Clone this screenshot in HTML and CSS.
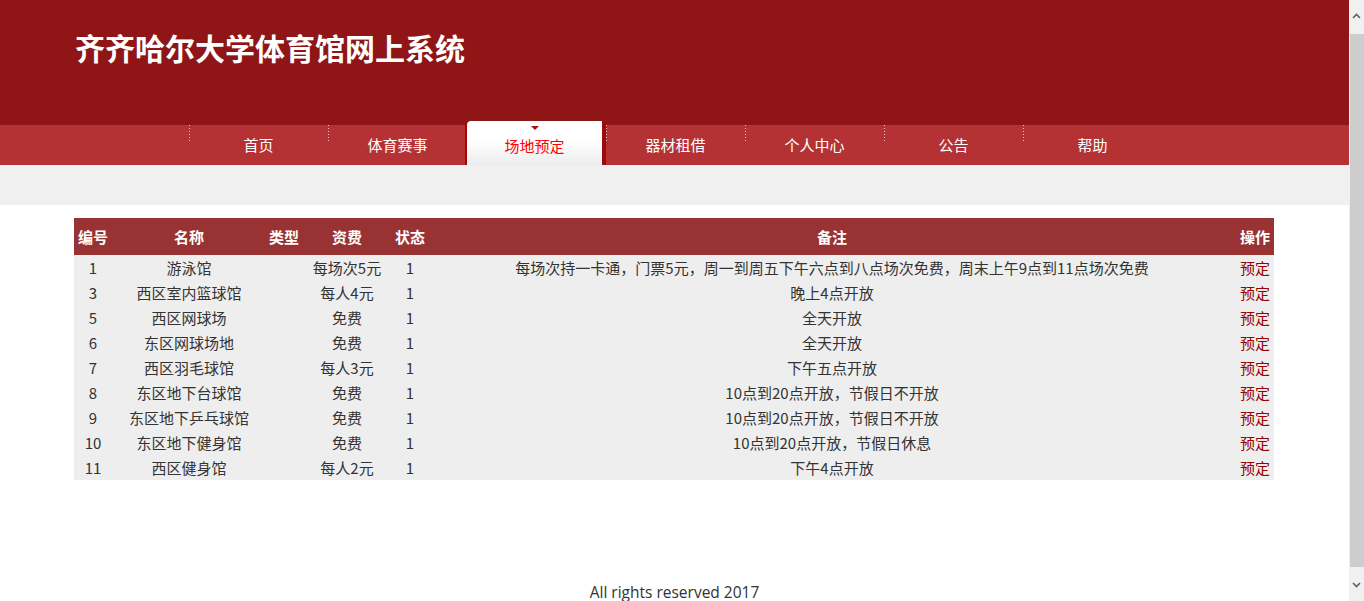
FILE: index.html
```html
<!DOCTYPE html>
<html lang="zh-CN">
<head>
<meta charset="utf-8">
<title>齐齐哈尔大学体育馆网上系统</title>
<link rel="stylesheet" href="styles.css">
</head>
<body>
<header class="top">
  <h1 class="title">齐齐哈尔大学体育馆网上系统</h1>
</header>
<nav class="nav">
  <ul class="menu">
    <li class="item"><a href="#">首页</a></li>
    <li class="item"><a href="#">体育赛事</a></li>
    <li class="item active"><span class="arrow"></span><a href="#">场地预定</a></li>
    <li class="item"><a href="#">器材租借</a></li>
    <li class="item"><a href="#">个人中心</a></li>
    <li class="item"><a href="#">公告</a></li>
    <li class="item"><a href="#">帮助</a></li>
  </ul>
</nav>
<div class="band"></div>
<main class="main">
  <table class="grid">
    <colgroup>
      <col class="c1"><col class="c2"><col class="c3"><col class="c4"><col class="c5"><col class="c6"><col class="c7">
    </colgroup>
    <thead>
      <tr><th>编号</th><th>名称</th><th>类型</th><th>资费</th><th>状态</th><th>备注</th><th class="op">操作</th></tr>
    </thead>
    <tbody>
      <tr><td>1</td><td>游泳馆</td><td></td><td>每场次5元</td><td>1</td><td>每场次持一卡通，门票5元，周一到周五下午六点到八点场次免费，周末上午9点到11点场次免费</td><td class="op"><a href="#">预定</a></td></tr>
      <tr><td>3</td><td>西区室内篮球馆</td><td></td><td>每人4元</td><td>1</td><td>晚上4点开放</td><td class="op"><a href="#">预定</a></td></tr>
      <tr><td>5</td><td>西区网球场</td><td></td><td>免费</td><td>1</td><td>全天开放</td><td class="op"><a href="#">预定</a></td></tr>
      <tr><td>6</td><td>东区网球场地</td><td></td><td>免费</td><td>1</td><td>全天开放</td><td class="op"><a href="#">预定</a></td></tr>
      <tr><td>7</td><td>西区羽毛球馆</td><td></td><td>每人3元</td><td>1</td><td>下午五点开放</td><td class="op"><a href="#">预定</a></td></tr>
      <tr><td>8</td><td>东区地下台球馆</td><td></td><td>免费</td><td>1</td><td>10点到20点开放，节假日不开放</td><td class="op"><a href="#">预定</a></td></tr>
      <tr><td>9</td><td>东区地下乒乓球馆</td><td></td><td>免费</td><td>1</td><td>10点到20点开放，节假日不开放</td><td class="op"><a href="#">预定</a></td></tr>
      <tr><td>10</td><td>东区地下健身馆</td><td></td><td>免费</td><td>1</td><td>10点到20点开放，节假日休息</td><td class="op"><a href="#">预定</a></td></tr>
      <tr><td>11</td><td>西区健身馆</td><td></td><td>每人2元</td><td>1</td><td>下午4点开放</td><td class="op"><a href="#">预定</a></td></tr>
    </tbody>
  </table>
</main>
<footer class="footer">All rights reserved 2017</footer>
<div class="scrollbar" aria-hidden="true">
  <div class="sb-btn">
    <svg width="9" height="6" viewBox="0 0 9 6"><path d="M1 5 L4.5 1.5 L8 5" fill="none" stroke="#606060" stroke-width="1.6"/></svg>
  </div>
  <div class="sb-track"><div class="sb-thumb"></div></div>
  <div class="sb-btn">
    <svg width="9" height="6" viewBox="0 0 9 6"><path d="M1 1 L4.5 4.5 L8 1" fill="none" stroke="#606060" stroke-width="1.6"/></svg>
  </div>
</div>
</body>
</html>
```

FILE: styles.css
```css
html, body {
  margin: 0;
  padding: 0;
}
body {
  margin-right: 15px;
  font-family: "Noto Sans CJK SC", "Noto Sans", sans-serif;
  font-size: 15px;
  color: #333;
  background: #fff;
}
.top {
  height: 125px;
  background: #8f1516;
  box-sizing: border-box;
  padding-top: 28px;
  padding-left: 75px;
}
.title {
  margin: 0;
  font-size: 30px;
  line-height: 38px;
  font-weight: bold;
  color: #fff;
}
.nav {
  height: 40px;
  background: #b53234;
}
.menu {
  list-style: none;
  margin: 0;
  padding: 0 0 0 189px;
  display: flex;
  height: 40px;
}
.item {
  width: 139px;
  height: 40px;
  text-align: center;
  background-image: repeating-linear-gradient(to bottom, #e6c2c2 0, #e6c2c2 1px, transparent 1px, transparent 3px);
  background-size: 1px 16px;
  background-repeat: no-repeat;
  background-position: left top;
}
.item a {
  display: block;
  color: #fff;
  text-decoration: none;
  line-height: 40px;
  font-size: 15px;
}
.item.active {
  margin-top: -4px;
  height: 44px;
  box-sizing: border-box;
  border-radius: 4px 4px 0 0;
  background: linear-gradient(to bottom, #ffffff 0%, #ffffff 45%, #ececec 100%);
  border-right: 4px solid #9c0a0a;
  box-shadow: -2px 0 0 #9c0a0a;
  padding-top: 5px;
}
.item.active .arrow {
  display: block;
  width: 0;
  height: 0;
  margin: 0 auto;
  border-top: 4px solid #a01010;
  border-left: 4px solid transparent;
  border-right: 4px solid transparent;
}
.item.active a {
  color: #ff0000;
  line-height: 32px;
}
.band {
  height: 40px;
  background: #f0f0f0;
}
.main {
  padding: 13px 0 0 74px;
}
.grid {
  width: 1200px;
  border-collapse: collapse;
  table-layout: fixed;
}
.c1 { width: 38px; }
.c2 { width: 154px; }
.c3 { width: 36px; }
.c4 { width: 90px; }
.c5 { width: 36px; }
.c6 { width: 808px; }
.c7 { width: 38px; }
.grid th {
  background: #993333;
  color: #fff;
  font-weight: bold;
  height: 37px;
  padding: 0;
  font-size: 15px;
  white-space: nowrap;
}
.grid td {
  background: #eeeeee;
  height: 25px;
  padding: 0;
  text-align: center;
  white-space: nowrap;
  line-height: 25px;
}
.grid .op {
  text-align: right;
  padding-right: 4px;
}
.grid td.op a {
  color: #990000;
  text-decoration: none;
}
.footer {
  margin-top: 101px;
  padding-bottom: 130px;
  text-align: center;
  font-family: "Open Sans", "Noto Sans", sans-serif;
  font-size: 15.5px;
  line-height: 22px;
  color: #333;
}
.scrollbar {
  position: fixed;
  top: 0;
  right: 0;
  bottom: 0;
  width: 15px;
  background: #f0f0f0;
  display: flex;
  flex-direction: column;
}
.sb-btn {
  height: 32px;
  display: flex;
  align-items: center;
  justify-content: center;
}
.sb-track {
  flex: 1;
  display: flex;
  padding: 2px 0 2px 1px;
}
.sb-thumb {
  flex: 1;
  background: #cdcdcd;
}
```
